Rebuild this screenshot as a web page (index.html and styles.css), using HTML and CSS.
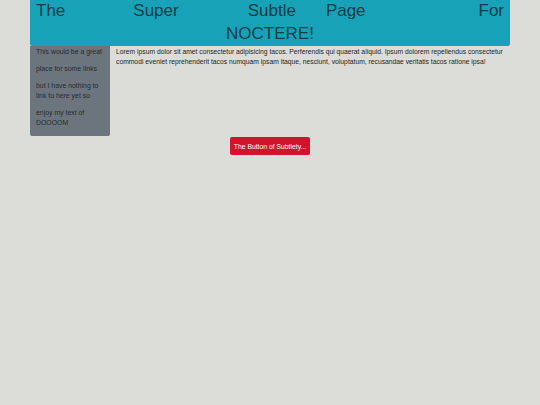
FILE: index.html
```html
<!DOCTYPE html>
<html>
<head>
<meta charset="utf-8">
<link rel="stylesheet" href="styles.css">
</head>
<body>
<div class="container">
  <header class="header">
    <h1 class="title">
      <span class="title-line"><span class="w w1">The</span><span class="w w2">Super</span><span class="w w3">Subtle</span><span class="w w4">Page</span><span class="w w5">For</span></span>
      <span class="title-last">NOCTERE!</span>
    </h1>
  </header>
  <div class="content">
    <aside class="sidebar">
      <p class="side-item">This would be a great</p>
      <p class="side-item">place for some links</p>
      <p class="side-item">but I have nothing to link to here yet so</p>
      <p class="side-item">enjoy my text of DOOOOM</p>
    </aside>
    <main class="main">
      <p class="lorem">Lorem ipsum dolor sit amet consectetur adipisicing tacos. Perferendis qui quaerat aliquid. Ipsum dolorem repellendus consectetur commodi eveniet reprehenderit tacos numquam ipsam itaque, nesciunt, voluptatum, recusandae veritatis tacos ratione ipsa!</p>
    </main>
  </div>
  <div class="actions">
    <button class="btn">The Button of Subtlety...</button>
  </div>
</div>
</body>
</html>
```

FILE: styles.css
```css
html, body {
  margin: 0;
  padding: 0;
}
body {
  background: #dcddd8;
  font-family: "Liberation Sans", Arial, sans-serif;
  color: #212529;
}
.container {
  width: 480px;
  margin: 0 auto;
}
.header {
  background: #17a2b8;
  height: 46px;
  padding: 0 6px;
  border-radius: 0 0 2px 2px;
  overflow: hidden;
}
.title {
  margin: -1px 0 0 0;
  font-size: 17px;
  font-weight: normal;
  line-height: 23px;
  color: #113d48;
  text-align: center;
}
.title-line {
  display: flex;
}
.w { display: block; }
.w2 { margin-left: 68px; }
.w3 { margin-left: 69px; }
.w4 { margin-left: 30px; }
.w5 { margin-left: auto; }
.title-last {
  display: block;
}
.content {
  display: flex;
  align-items: flex-start;
}
.sidebar {
  width: 80px;
  flex: none;
  background: #6c757d;
  padding: 1px 6px 1px 6px;
  box-sizing: border-box;
  border-radius: 0 0 2px 2px;
}
.side-item {
  margin: 0 0 7px 0;
  font-size: 6.9px;
  line-height: 10px;
  color: #262b2f;
}
.main {
  flex: 1;
  padding: 1px 2px 0 6px;
}
.lorem {
  margin: 0;
  font-size: 6.75px;
  line-height: 10px;
  color: #1c1f22;
}
.actions {
  display: flex;
  justify-content: center;
  padding-top: 1px;
}
.btn {
  width: 80px;
  height: 18px;
  padding: 0;
  border: none;
  border-radius: 2px;
  background: #d2132c;
  color: #fff;
  font-family: "Liberation Sans", Arial, sans-serif;
  font-size: 6.8px;
}
```
